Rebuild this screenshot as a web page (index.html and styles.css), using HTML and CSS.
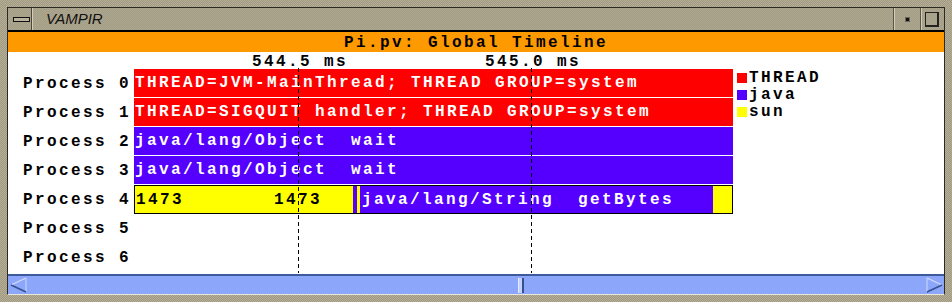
FILE: index.html
```html
<!DOCTYPE html>
<html>
  <head>
    <title>VAMPIR - Global Timeline</title>
    <link rel="stylesheet" href="styles.css">
  </head>

  <body>
    <div class="window">
      <div class="inner">
        <div class="titlebar">
          <div class="tb-btn menu-btn"><span class="bar-icon"></span></div>
          <div class="tb-title">VAMPIR</div>
          <div class="tb-btn min-btn"><span class="dot-icon"></span></div>
          <div class="tb-btn max-btn"><span class="square-icon"></span></div>
        </div>

        <div class="heading">Pi.pv: Global Timeline</div>

        <div class="timeline">
          <div class="labels">
            <div class="label">Process 0</div>
            <div class="label">Process 1</div>
            <div class="label">Process 2</div>
            <div class="label">Process 3</div>
            <div class="label">Process 4</div>
            <div class="label">Process 5</div>
            <div class="label">Process 6</div>
          </div>

          <div class="track">
            <div class="row"><div class="bar red">THREAD=JVM-MainThread; THREAD GROUP=system</div></div>
            <div class="row"><div class="bar red">THREAD=SIGQUIT handler; THREAD GROUP=system</div></div>
            <div class="row"><div class="bar blue">java/lang/Object  wait</div></div>
            <div class="row"><div class="bar blue">java/lang/Object  wait</div></div>
            <div class="row">
              <div class="bar split">
                <div class="seg yellow" style="width: 138px">1473</div>
                <div class="seg yellow" style="width: 80px">1473</div>
                <div class="seg blue" style="width: 4px"></div>
                <div class="seg yellow" style="width: 3px"></div>
                <div class="seg blue" style="width: 353px">java/lang/String  getBytes</div>
                <div class="seg yellow" style="width: 19px"></div>
              </div>
            </div>
            <div class="row"></div>
            <div class="row"></div>

            <div class="marker" style="left: 164px"><span class="marker-label">544.5 ms</span></div>
            <div class="marker" style="left: 397px"><span class="marker-label">545.0 ms</span></div>
          </div>

          <div class="legend">
            <div class="legend-item"><span class="swatch red"></span>THREAD</div>
            <div class="legend-item"><span class="swatch blue"></span>java</div>
            <div class="legend-item"><span class="swatch yellow"></span>sun</div>
          </div>
        </div>

        <div class="hscroll">
          <svg class="arrow" width="17" height="16" viewBox="0 0 17 16">
            <line x1="1" y1="8" x2="16" y2="1" stroke="#d4ddff" stroke-width="1.2"/>
            <line x1="16" y1="1" x2="16" y2="15" stroke="#c4d0ff" stroke-width="1.2"/>
            <line x1="1" y1="8" x2="16" y2="15" stroke="#34508f" stroke-width="1.4"/>
          </svg>
          <div class="trough"><span class="thumb"></span></div>
          <svg class="arrow right" width="17" height="16" viewBox="0 0 17 16">
            <line x1="1" y1="1" x2="16" y2="8" stroke="#d4ddff" stroke-width="1.2"/>
            <line x1="1" y1="1" x2="1" y2="15" stroke="#c4d0ff" stroke-width="1.2"/>
            <line x1="1" y1="15" x2="16" y2="8" stroke="#34508f" stroke-width="1.4"/>
          </svg>
        </div>
      </div>
    </div>
  </body>
</html>
```

FILE: styles.css
```css
body
{
  margin: 0;
  font-family: "Liberation Mono", "DejaVu Sans Mono", monospace;
  background-color: #a9a18a;
}

/* window frame */

.window
{
  width: 952px;
  height: 302px;
  box-sizing: border-box;
  padding: 7px;
  background: repeating-conic-gradient(#a0987f 0 25%, #b6af99 0 50%) 0 0 / 2px 2px;
}

.inner
{
  height: 100%;
  box-sizing: border-box;
  border: 1px solid #2c2920;
  border-bottom-color: #ebe7dc;
  display: flex;
  flex-direction: column;
}

.titlebar
{
  height: 22px;
  border-bottom: 2px solid #000;
  display: flex;
  background: repeating-conic-gradient(#a49d86 0 25%, #aea790 0 50%) 0 0 / 2px 2px;
}

.tb-btn
{
  display: flex;
  align-items: center;
  justify-content: center;
}

.menu-btn
{
  width: 23px;
  border-right: 1px solid #4b473b;
  box-shadow: 1px 0 0 #d3cdba;
}

.bar-icon
{
  width: 15px;
  height: 3px;
  margin-left: 3px;
  border: 1px solid #111;
  background-color: #b9b29c;
}

.tb-title
{
  flex: 1;
  padding-left: 14px;
  font: italic 15px/22px "Liberation Sans", Arial, sans-serif;
  color: #111;
}

.min-btn
{
  width: 26px;
  border-left: 1px solid #5a5646;
  box-shadow: inset 1px 0 0 #d3cdba;
}

.dot-icon
{
  width: 3px;
  height: 3px;
  background-color: #111;
  box-shadow: 0 0 0 1px #6c6756;
}

.max-btn
{
  width: 23px;
  border-left: 1px solid #5a5646;
  box-shadow: inset 1px 0 0 #d3cdba;
}

.square-icon
{
  width: 11px;
  height: 12px;
  margin-right: 2px;
  border: 1px solid #222;
  border-right-width: 2px;
  border-bottom-width: 2px;
  background-color: #aaa38c;
}

/* orange heading strip */

.heading
{
  height: 20px;
  box-sizing: border-box;
  padding-top: 1px;
  background-color: #ff9900;
  text-align: center;
  font-weight: bold;
  font-size: 16px;
  line-height: 20px;
  letter-spacing: 2.4px;
  color: #000;
}

/* timeline */

.timeline
{
  flex: 1;
  display: flex;
  background-color: #fff;
  font-weight: bold;
  font-size: 16px;
  letter-spacing: 2.4px;
  color: #000;
}

.labels
{
  width: 111px;
  padding: 18px 0 0 15px;
}

.label
{
  height: 29px;
  line-height: 29px;
  white-space: pre;
}

.track
{
  position: relative;
  width: 599px;
  padding-top: 17px;
}

.row
{
  height: 29px;
}

.bar
{
  height: 28px;
  line-height: 29px;
  padding-left: 1px;
  white-space: pre;
  overflow: hidden;
  color: #fff;
}

.bar.split
{
  display: flex;
  height: 29px;
  box-sizing: border-box;
  padding: 0;
  border: 1px solid #000;
  line-height: 28px;
}

.seg
{
  flex: none;
  padding-left: 1px;
  box-sizing: border-box;
  overflow: hidden;
  white-space: pre;
}

.red { background-color: #ff0000; }
.blue { background-color: #5500ff; }
.yellow { background-color: #ffff00; color: #000; }

.seg.blue { padding-left: 2px; }

.marker
{
  position: absolute;
  top: 0;
  bottom: 1px;
  width: 1px;
}

.marker::before
{
  content: "";
  position: absolute;
  top: 16px;
  bottom: 0;
  left: 0;
  width: 1px;
  background: repeating-linear-gradient(to bottom, #000 0 4px, transparent 4px 7px);
}

.marker-label
{
  position: absolute;
  top: 2px;
  left: 2px;
  transform: translateX(-50%);
  line-height: 17px;
  white-space: pre;
}

/* legend */

.legend
{
  margin-left: 4px;
  padding-top: 18px;
}

.legend-item
{
  display: flex;
  align-items: center;
  height: 17px;
  line-height: 17px;
  gap: 2px;
}

.swatch
{
  width: 10px;
  height: 10px;
  margin-top: -2px;
}

/* horizontal scrollbar */

.hscroll
{
  height: 20px;
  box-sizing: border-box;
  border-top: 2px solid #3d5a9d;
  background-color: #8ca6f9;
  display: flex;
  align-items: center;
}

.arrow
{
  flex: none;
  margin-left: 2px;
}

.arrow.right
{
  margin-left: 0;
  margin-right: 1px;
}

.trough
{
  flex: 1;
  height: 100%;
  display: flex;
  align-items: center;
}

.thumb
{
  width: 3px;
  height: 15px;
  margin-left: 491px;
  background-color: #c3d0ff;
  border-left: 1px solid #e6ecff;
  border-right: 2px solid #34508f;
}
```
